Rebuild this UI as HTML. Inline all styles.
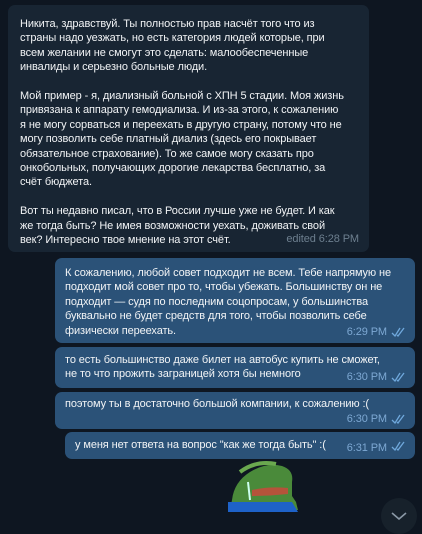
<!DOCTYPE html>
<html><head><meta charset="utf-8"><style>
body{margin:0;width:422px;height:520px;background:#0e1621;overflow:hidden;position:relative;font-family:"Liberation Sans","DejaVu Sans",sans-serif;font-size:11px;line-height:14.4px;color:#f2f4f6;letter-spacing:-0.1px}
.b{position:absolute;border-radius:7px;box-sizing:border-box;white-space:nowrap}
.in{background:#182533;left:8px;top:5px;width:361px;height:247px;padding:12px 12px}
.out{background:#2b5278;left:55px;width:360px;padding:8px 10px}
.t{position:absolute;font-size:11px;color:#6d7f8f;right:10px}
.out .t{color:#7da8d3;right:28px}
.ck{position:absolute;right:10px;width:14px;height:10px}
p{margin:0}
</style></head><body>
<div class="b in">
<p>Никита, здравствуй. Ты полностью прав насчёт того что из<br>страны надо уезжать, но есть категория людей которые, при<br>всем желании не смогут это сделать: малообеспеченные<br>инвалиды и серьезно больные люди.</p><p>&nbsp;</p>
<p>Мой пример - я, диализный больной с ХПН 5 стадии. Моя жизнь<br>привязана к аппарату гемодиализа. И из-за этого, к сожалению<br>я не могу сорваться и переехать в другую страну, потому что не<br>могу позволить себе платный диализ (здесь его покрывает<br>обязательное страхование). То же самое могу сказать про<br>онкобольных, получающих дорогие лекарства бесплатно, за<br>счёт бюджета.</p><p>&nbsp;</p>
<p>Вот ты недавно писал, что в России лучше уже не будет. И как<br>же тогда быть? Не имея возможности уехать, доживать свой<br>век? Интересно твое мнение на этот счёт.</p>
<span class="t" style="bottom:6px">edited 6:28 PM</span>
</div>
<div class="b out" style="top:258px;height:85px"><p>К сожалению, любой совет подходит не всем. Тебе напрямую не<br>подходит мой совет про то, чтобы убежать. Большинству он не<br>подходит — судя по последним соцопросам, у большинства<br>буквально не будет средств для того, чтобы позволить себе<br>физически переехать.</p><span class="t" style="bottom:4px">6:29 PM</span><svg class="ck" style="bottom:6px" viewBox="0 0 14 10"><path d="M1 6l3 3 5-8M6 8l1 1 6-8" stroke="#6fa8dc" stroke-width="1.3" fill="none"/></svg></div>
<div class="b out" style="top:347px;height:41px;padding-top:6px"><p>то есть большинство даже билет на автобус купить не сможет,<br>не то что прожить заграницей хотя бы немного</p><span class="t" style="bottom:4px">6:30 PM</span><svg class="ck" style="bottom:6px" viewBox="0 0 14 10"><path d="M1 6l3 3 5-8M6 8l1 1 6-8" stroke="#6fa8dc" stroke-width="1.3" fill="none"/></svg></div>
<div class="b out" style="top:392px;height:37px;padding-top:5px"><p>поэтому ты в достаточно большой компании, к сожалению :(</p><span class="t" style="bottom:3px">6:30 PM</span><svg class="ck" style="bottom:5px" viewBox="0 0 14 10"><path d="M1 6l3 3 5-8M6 8l1 1 6-8" stroke="#6fa8dc" stroke-width="1.3" fill="none"/></svg></div>
<div class="b out" style="top:432px;height:27px;left:65px;width:350px;padding-top:6px"><p>у меня нет ответа на вопрос "как же тогда быть" :(</p><span class="t" style="bottom:4px">6:31 PM</span><svg class="ck" style="bottom:8px" viewBox="0 0 14 10"><path d="M1 6l3 3 5-8M6 8l1 1 6-8" stroke="#6fa8dc" stroke-width="1.3" fill="none"/></svg></div>
<svg style="position:absolute;left:226px;top:460px" width="74" height="54" viewBox="0 0 74 54">
<path d="M4 50 L6 40 Q8 22 24 12 Q40 2 56 6 Q68 10 66 22 L66 36 L70 42 L72 50 Z" fill="#4a8a3a"/>
<path d="M14 12 Q30 0 50 4" stroke="#6aa84f" stroke-width="4" fill="none"/>
<path d="M26 30 Q44 26 62 28 L62 34 Q44 36 26 36 Z" fill="#b5533a"/>
<path d="M22 22 L24 40" stroke="#cfe" stroke-width="2"/>
<path d="M2 42 L66 42 L72 52 L2 52 Z" fill="#1e62c8"/>
</svg>
<div style="position:absolute;left:381px;top:498px;width:36px;height:36px;border-radius:50%;background:#17212b"></div>
<svg style="position:absolute;left:391px;top:512px" width="16" height="8" viewBox="0 0 16 8"><path d="M1 1l7 6 7-6" stroke="#8a98a6" stroke-width="1.6" fill="none"/></svg>
</body></html>
